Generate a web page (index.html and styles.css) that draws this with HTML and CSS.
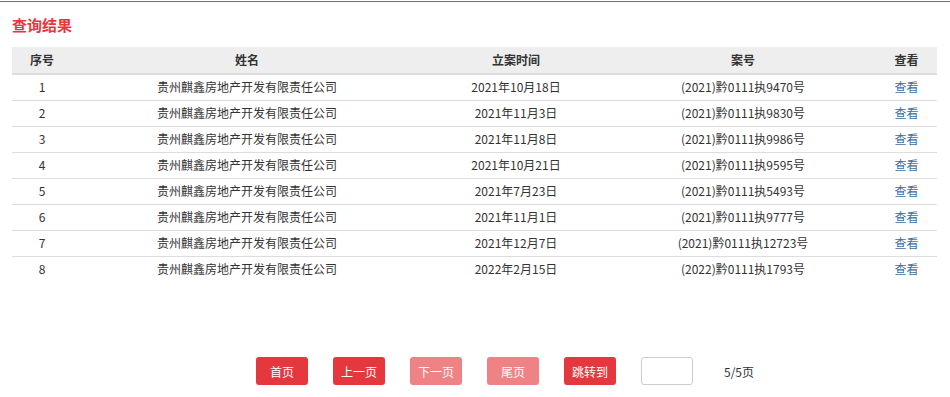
FILE: index.html
```html
<!DOCTYPE html>
<html lang="zh-CN">
<head>
<meta charset="utf-8">
<title>查询结果</title>
<link rel="stylesheet" href="styles.css">
</head>
<body>
<div class="topline"></div>
<div class="page">
  <h2 class="title">查询结果</h2>
  <table class="result">
    <colgroup>
      <col class="c1"><col class="c2"><col class="c3"><col class="c4"><col class="c5">
    </colgroup>
    <thead>
      <tr><th>序号</th><th>姓名</th><th>立案时间</th><th>案号</th><th>查看</th></tr>
    </thead>
    <tbody>
      <tr><td>1</td><td>贵州麒鑫房地产开发有限责任公司</td><td>2021年10月18日</td><td>(2021)黔0111执9470号</td><td><a class="view">查看</a></td></tr>
      <tr><td>2</td><td>贵州麒鑫房地产开发有限责任公司</td><td>2021年11月3日</td><td>(2021)黔0111执9830号</td><td><a class="view">查看</a></td></tr>
      <tr><td>3</td><td>贵州麒鑫房地产开发有限责任公司</td><td>2021年11月8日</td><td>(2021)黔0111执9986号</td><td><a class="view">查看</a></td></tr>
      <tr><td>4</td><td>贵州麒鑫房地产开发有限责任公司</td><td>2021年10月21日</td><td>(2021)黔0111执9595号</td><td><a class="view">查看</a></td></tr>
      <tr><td>5</td><td>贵州麒鑫房地产开发有限责任公司</td><td>2021年7月23日</td><td>(2021)黔0111执5493号</td><td><a class="view">查看</a></td></tr>
      <tr><td>6</td><td>贵州麒鑫房地产开发有限责任公司</td><td>2021年11月1日</td><td>(2021)黔0111执9777号</td><td><a class="view">查看</a></td></tr>
      <tr><td>7</td><td>贵州麒鑫房地产开发有限责任公司</td><td>2021年12月7日</td><td>(2021)黔0111执12723号</td><td><a class="view">查看</a></td></tr>
      <tr><td>8</td><td>贵州麒鑫房地产开发有限责任公司</td><td>2022年2月15日</td><td>(2022)黔0111执1793号</td><td><a class="view">查看</a></td></tr>
    </tbody>
  </table>
  <div class="pager">
    <button class="btn">首页</button>
    <button class="btn">上一页</button>
    <button class="btn disabled">下一页</button>
    <button class="btn disabled">尾页</button>
    <button class="btn">跳转到</button>
    <input class="jump" type="text">
    <span class="count">5/5页</span>
  </div>
</div>
</body>
</html>
```
FILE: styles.css
```css
html, body {
  margin: 0;
  padding: 0;
  background: #fff;
}
body {
  font-family: "Noto Sans CJK SC", "Noto Sans", sans-serif;
  font-size: 12px;
  color: #333;
}
.topline {
  height: 1px;
  margin-top: 1px;
  background: #d9443f;
}
.page {
  padding: 0 13px 0 12px;
}
.title {
  margin: 12px 0 0;
  height: 22px;
  line-height: 22px;
  font-size: 15px;
  font-weight: bold;
  color: #e5383e;
}
.result {
  margin-top: 11px;
  width: 925px;
  border-collapse: collapse;
  table-layout: fixed;
}
.c1 { width: 60px; }
.c2 { width: 350px; }
.c3 { width: 188px; }
.c4 { width: 266px; }
.c5 { width: 61px; }
.result th {
  height: 26px;
  padding: 0;
  background: #eeeeee;
  border-bottom: 2px solid #dddddd;
  font-weight: bold;
  font-size: 12px;
  color: #333;
  text-align: center;
  line-height: 26px;
}
.result td {
  height: 23px;
  padding: 0 0 2px;
  text-align: center;
  line-height: 23px;
  border-bottom: 1px solid #dddddd;
}
.result tbody tr:last-child td {
  border-bottom: none;
}
.view {
  color: #3a6ea5;
  text-decoration: none;
  cursor: pointer;
}
.pager {
  display: flex;
  align-items: center;
  gap: 25px;
  margin-top: 75px;
  padding-left: 244px;
}
.btn {
  width: 52px;
  height: 28px;
  padding: 0;
  border: none;
  border-radius: 3px;
  background: #e5383e;
  color: #fff;
  font-family: inherit;
  font-size: 12px;
  cursor: pointer;
}
.btn.disabled {
  background: #ef8284;
}
.jump {
  box-sizing: border-box;
  width: 52px;
  height: 28px;
  border: 1px solid #cccccc;
  border-radius: 3px;
  padding: 0 4px;
  margin: 0;
}
.count {
  margin-left: 6px;
  color: #333;
}
```
